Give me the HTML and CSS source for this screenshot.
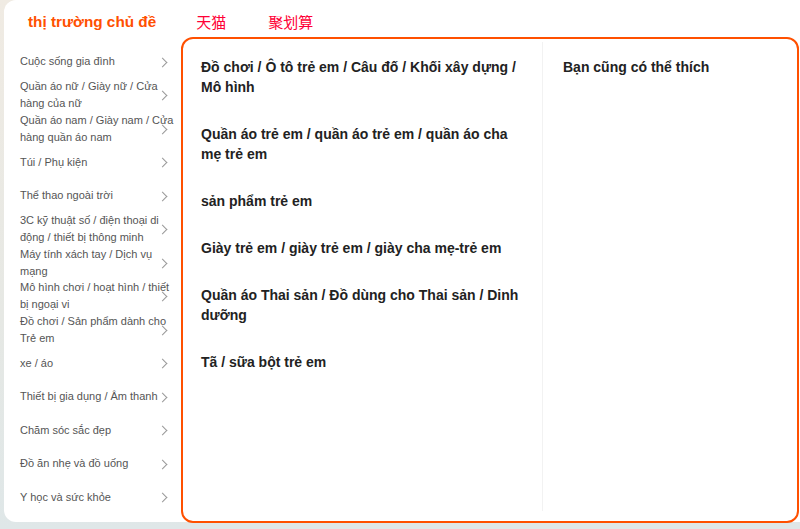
FILE: index.html
```html
<!DOCTYPE html>
<html lang="vi">
<head>
  <meta charset="UTF-8" />
  <meta name="viewport" content="width=device-width, initial-scale=1.0"/>
  <title>thị trường chủ đề</title>
  <link rel="stylesheet" href="styles.css">
</head>
<body>

  <div id="card">
    <!-- Tabs -->
    <div id="tabs">
      <span class="tab active">thị trường chủ đề</span>
      <span class="tab cn">天猫</span>
      <span class="tab cn">聚划算</span>
    </div>

    <div id="main">
      <!-- Category menu -->
      <ul id="menu">
        <li><span class="label">Cuộc sống gia đình</span><span class="arrow"></span></li>
        <li><span class="label">Quần áo nữ / Giày nữ / Cửa hàng của nữ</span><span class="arrow"></span></li>
        <li><span class="label">Quần áo nam / Giày nam / Cửa hàng quần áo nam</span><span class="arrow"></span></li>
        <li><span class="label">Túi / Phụ kiện</span><span class="arrow"></span></li>
        <li><span class="label">Thể thao ngoài trời</span><span class="arrow"></span></li>
        <li><span class="label">3C kỹ thuật số / điện thoại di động / thiết bị thông minh</span><span class="arrow"></span></li>
        <li><span class="label">Máy tính xách tay / Dịch vụ mạng</span><span class="arrow"></span></li>
        <li><span class="label">Mô hình chơi / hoạt hình / thiết bị ngoại vi</span><span class="arrow"></span></li>
        <li><span class="label">Đồ chơi / Sản phẩm dành cho Trẻ em</span><span class="arrow"></span></li>
        <li><span class="label">xe / áo</span><span class="arrow"></span></li>
        <li><span class="label">Thiết bị gia dụng / Âm thanh</span><span class="arrow"></span></li>
        <li><span class="label">Chăm sóc sắc đẹp</span><span class="arrow"></span></li>
        <li><span class="label">Đồ ăn nhẹ và đồ uống</span><span class="arrow"></span></li>
        <li><span class="label">Y học và sức khỏe</span><span class="arrow"></span></li>
      </ul>

      <!-- Sub categories -->
      <div id="panel">
        <div class="subcats">
          <div class="sub">Đồ chơi / Ô tô trẻ em / Câu đố / Khối xây dựng / Mô hình</div>
          <div class="sub">Quần áo trẻ em / quần áo trẻ em / quần áo cha mẹ trẻ em</div>
          <div class="sub">sản phẩm trẻ em</div>
          <div class="sub">Giày trẻ em / giày trẻ em / giày cha mẹ-trẻ em</div>
          <div class="sub">Quần áo Thai sản / Đồ dùng cho Thai sản / Dinh dưỡng</div>
          <div class="sub">Tã / sữa bột trẻ em</div>
        </div>
        <div class="suggest">
          <div class="sub">Bạn cũng có thể thích</div>
        </div>
      </div>
    </div>
  </div>

</body>
</html>
```

FILE: styles.css
```css
/* -- Reset & Base -- */
* { box-sizing: border-box; margin: 0; padding: 0; }
body {
  font-family: 'Liberation Sans', 'Noto Sans CJK SC', sans-serif;
  background: linear-gradient(180deg, #f0ebe3 0%, #e6e8e4 60%, #dfe7e8 100%);
  color: #333;
  height: 100vh;
  overflow: hidden;
}
ul { list-style: none; }

/* -- Card -- */
#card {
  margin-left: 4px;
  width: 810px;
  height: 522px;
  background: #fff;
  border-radius: 12px 0 0 12px;
}

/* -- Tabs -- */
#tabs {
  height: 37px;
  display: flex;
  align-items: center;
  padding: 6px 0 0 24px;
}
.tab.active {
  font-size: 15.3px;
  font-weight: bold;
  color: #ff5000;
  margin-right: 40px;
}
.tab.cn {
  font-family: 'Noto Sans CJK SC', sans-serif;
  color: #ff0036;
  font-size: 15px;
  margin-right: 42px;
}

/* -- Layout -- */
#main {
  display: flex;
}

/* -- Category menu -- */
#menu {
  width: 177px;
  padding: 8px 0 0 16px;
}
#menu li {
  position: relative;
  height: 33.5px;
  display: flex;
  align-items: center;
}
#menu .label {
  width: 156px;
  font-size: 11px;
  line-height: 17px;
  color: #555;
}
#menu .arrow {
  position: absolute;
  left: 139px;
  top: 50%;
  width: 7px;
  height: 7px;
  margin-top: -3px;
  border-top: 1px solid #999;
  border-right: 1px solid #999;
  transform: rotate(45deg);
}

/* -- Panel -- */
#panel {
  width: 618px;
  height: 486px;
  border: 2px solid #ff5000;
  border-radius: 12px;
  display: flex;
  padding: 3px 0 10px;
}
.subcats {
  width: 360px;
  padding: 15px 17px 0 18px;
  border-right: 1px solid #f2f2f2;
}
.sub {
  font-size: 14px;
  font-weight: bold;
  line-height: 20px;
  color: #222;
  margin-bottom: 27px;
}
.suggest {
  flex: 1;
  padding: 15px 20px 0 20px;
}
```
